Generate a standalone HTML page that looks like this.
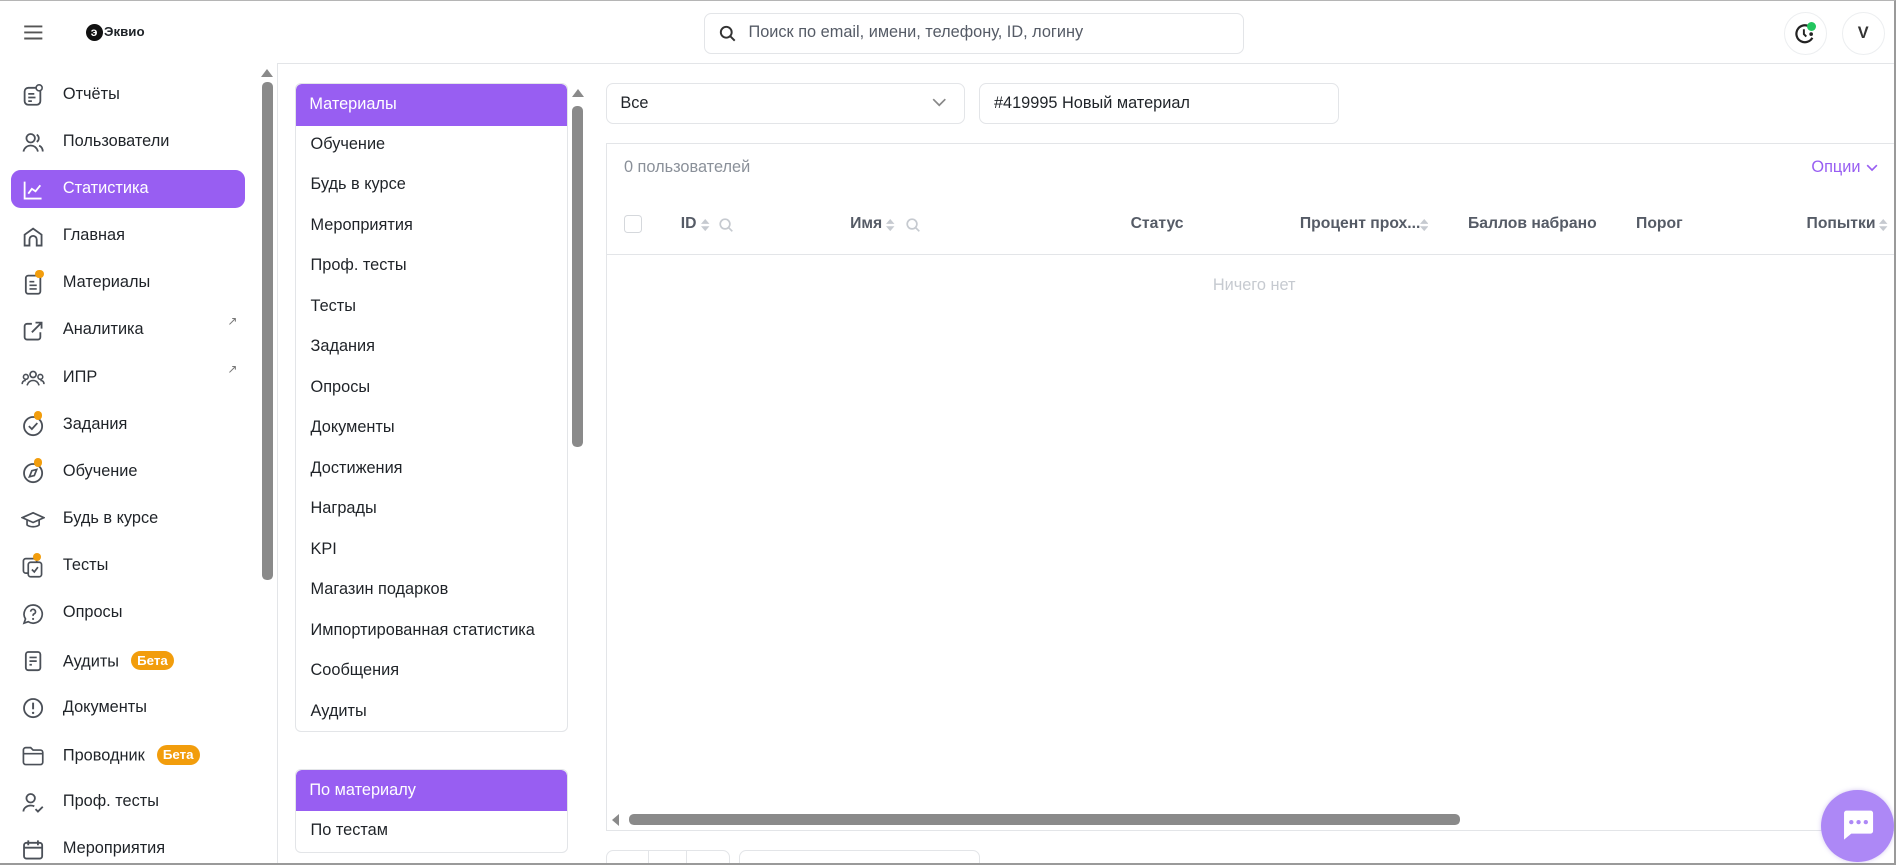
<!DOCTYPE html>
<html><head><meta charset="utf-8">
<style>
html{zoom:1.2092;overflow:hidden}
body{margin:0;width:1568px;height:715px;overflow:hidden;background:#fff;font-family:"Liberation Sans","DejaVu Sans",sans-serif;font-size:13.5px;color:#1f2328;position:relative}
.a{position:absolute}
.frame{left:0;top:0;width:1566px;height:713px;border-top:1px solid #b5b5b5;border-right:2px solid #9a9a9a;border-bottom:2px solid #9a9a9a;z-index:5}
.hdrline{left:229px;top:52px;width:1339px;height:1px;background:#e3e5e8}
.side{left:0;top:60px;width:215px}
.it{position:absolute;left:0;height:30px;width:215px}
.it svg{position:absolute;left:17px;top:6px}
.it span{position:absolute;left:52px;top:7px;white-space:nowrap}
.act{left:9px;width:194px;height:31px;background:#985ef2;border-radius:8px}
.beta{display:inline-block;background:#f29d0c;color:#fff;font-size:11px;font-weight:bold;border-radius:9px;padding:2px 5px;margin-left:10px;vertical-align:1px}
.dot{position:absolute;width:7px;height:7px;border-radius:50%;background:#f29d0c}
.sb{background:#8a8a8a;border-radius:4px}
.tri{width:0;height:0;border-left:5px solid transparent;border-right:5px solid transparent;border-bottom:7px solid #8a8a8a}
.box{border:1px solid #e3e5e8;border-radius:5px;background:#fff}
.mi{position:absolute;left:12px;white-space:nowrap}
.ph{background:#985ef2;color:#fff;height:34px;border-radius:5px 5px 0 0;padding-left:11px;line-height:34px}
.th{top:178px;color:#555b66;font-weight:bold;font-size:13px;white-space:nowrap}
</style></head><body>
<div class="a frame"></div>
<div class="a hdrline"></div>
<div class="a" style="left:229px;top:53px;width:1px;height:662px;background:#e3e5e8"></div>

<svg class="a" style="left:19px;top:20px" width="17" height="14"><path d="M1 2H16M1 7H16M1 12H16" stroke="#555" stroke-width="1.6"/></svg>
<div class="a" style="left:71px;top:20px;width:14px;height:14px;border-radius:50%;background:#111"></div>
<div class="a" style="left:75px;top:21px;color:#fff;font-size:10px;font-weight:bold">э</div>
<div class="a" style="left:86px;top:20px;font-size:11px;font-weight:bold">Эквио</div>
<div class="a box" style="left:582px;top:11px;width:445px;height:32px;border-radius:6px"></div>
<svg class="a" style="left:595px;top:21px" width="14" height="14"><circle cx="6" cy="6" r="4.5" stroke="#333" stroke-width="1.6" fill="none"/><path d="M9.5 9.5L13 13" stroke="#333" stroke-width="1.6"/></svg>
<div class="a" style="left:619px;top:19px;color:#555b66">Поиск по email, имени, телефону, ID, логину</div>
<div class="a" style="left:1475px;top:10px;width:34px;height:34px;border:1px solid #eceef0;border-radius:50%"></div>
<svg class="a" style="left:1483px;top:18px" width="20" height="20"><path d="M13 3.5A7 7 0 1 0 16 13" stroke="#222" stroke-width="1.8" fill="none"/><path d="M9 6v4l2 2" stroke="#222" stroke-width="1.6" fill="none"/><circle cx="15" cy="10" r="1.5" fill="#222"/></svg>
<div class="a" style="left:1494px;top:18px;width:8px;height:8px;border-radius:50%;background:#22c55e"></div>
<div class="a" style="left:1523px;top:10px;width:34px;height:34px;border:1px solid #eceef0;border-radius:50%;text-align:center;line-height:34px;font-weight:bold;color:#333">V</div>

<div class="a act" style="top:141px"></div>
<div class="a side">
<div class="it" style="top:3px"><svg width="20" height="20"><rect x="3" y="4" width="13" height="14" rx="3" stroke="#4b5058" stroke-width="1.5" fill="none"/><path d="M6 9h5M6 12h6M6 15h3" stroke="#4b5058" stroke-width="1.4"/><circle cx="15" cy="4" r="2.5" fill="#fff" stroke="#4b5058" stroke-width="1.3"/></svg><span>Отчёты</span></div>
<div class="it" style="top:42px"><svg width="20" height="20"><circle cx="8" cy="6" r="3.5" stroke="#4b5058" stroke-width="1.5" fill="none"/><path d="M2 17c1-4 4-5 6-5s5 1 6 5M13 3a3.5 3.5 0 0 1 0 6M15 12c2 1 3 3 3 5" stroke="#4b5058" stroke-width="1.5" fill="none"/></svg><span>Пользователи</span></div>
<div class="it" style="top:81px"><svg width="20" height="20"><path d="M3 3v14h14M6 13l3-4 3 2 4-5" stroke="#fff" stroke-width="1.5" fill="none"/></svg><span style="color:#fff">Статистика</span></div>
<div class="it" style="top:120px"><svg width="20" height="20"><path d="M3 17V8l7-5 7 5v9h-4v-5a3 3 0 0 0-6 0v5z" stroke="#4b5058" stroke-width="1.5" fill="none"/></svg><span>Главная</span></div>
<div class="it" style="top:159px"><svg width="20" height="20"><rect x="4" y="3" width="12" height="15" rx="2" stroke="#4b5058" stroke-width="1.5" fill="none"/><path d="M7 8h4M7 11h6M7 14h6" stroke="#4b5058" stroke-width="1.4"/></svg><div class="dot" style="left:29px;top:4px"></div><span>Материалы</span></div>
<div class="it" style="top:198px"><svg width="20" height="20"><path d="M9 4H5a2 2 0 0 0-2 2v9a2 2 0 0 0 2 2h9a2 2 0 0 0 2-2v-4M12 3h5v5M17 3l-8 8" stroke="#4b5058" stroke-width="1.5" fill="none"/></svg><span>Аналитика</span><span style="left:188px;top:2px;font-size:10px;color:#777">↗</span></div>
<div class="it" style="top:237px"><svg width="20" height="20"><circle cx="10" cy="7" r="2.5" stroke="#4b5058" stroke-width="1.4" fill="none"/><circle cx="4" cy="9" r="2" stroke="#4b5058" stroke-width="1.3" fill="none"/><circle cx="16" cy="9" r="2" stroke="#4b5058" stroke-width="1.3" fill="none"/><path d="M5 16c1-3 3-4 5-4s4 1 5 4M1 15c0-2 1-3 3-3M19 15c0-2-1-3-3-3" stroke="#4b5058" stroke-width="1.3" fill="none"/></svg><span>ИПР</span><span style="left:188px;top:2px;font-size:10px;color:#777">↗</span></div>
<div class="it" style="top:276px"><svg width="20" height="20"><circle cx="10" cy="10" r="7.5" stroke="#4b5058" stroke-width="1.5" fill="none"/><path d="M6.5 10l2.5 2.5 4.5-5" stroke="#4b5058" stroke-width="1.5" fill="none"/></svg><div class="dot" style="left:28px;top:4px"></div><span>Задания</span></div>
<div class="it" style="top:315px"><svg width="20" height="20"><circle cx="10" cy="10" r="7.5" stroke="#4b5058" stroke-width="1.5" fill="none"/><path d="M7 13l2-5 4-1-2 5z" stroke="#4b5058" stroke-width="1.4" fill="none"/></svg><div class="dot" style="left:28px;top:4px"></div><span>Обучение</span></div>
<div class="it" style="top:354px"><svg width="20" height="20"><path d="M1 8l9-4 9 4-9 4z M5 10v4c2 2 8 2 10 0v-4" stroke="#4b5058" stroke-width="1.4" fill="none"/></svg><span>Будь в курсе</span></div>
<div class="it" style="top:393px"><svg width="20" height="20"><rect x="2" y="3" width="11" height="12" rx="2" stroke="#4b5058" stroke-width="1.4" fill="none"/><rect x="6" y="6" width="11" height="12" rx="2" fill="#fff" stroke="#4b5058" stroke-width="1.4"/><path d="M9 12l2 2 3-4" stroke="#4b5058" stroke-width="1.4" fill="none"/></svg><div class="dot" style="left:27px;top:4px"></div><span>Тесты</span></div>
<div class="it" style="top:432px"><svg width="20" height="20"><path d="M10 2.5a7.5 7.5 0 1 1-4 13.8L2.5 17.5l1.2-3.5A7.5 7.5 0 0 1 10 2.5z" stroke="#4b5058" stroke-width="1.4" fill="none"/><path d="M8 8a2 2 0 1 1 2.5 2c-.5.2-.5 1-.5 1.5" stroke="#4b5058" stroke-width="1.4" fill="none"/><circle cx="10" cy="14" r=".9" fill="#4b5058"/></svg><span>Опросы</span></div>
<div class="it" style="top:471px"><svg width="20" height="20"><rect x="4" y="2.5" width="12" height="15" rx="2" stroke="#4b5058" stroke-width="1.5" fill="none"/><path d="M7 7h6M7 10h6M7 13h2" stroke="#4b5058" stroke-width="1.4"/></svg><span>Аудиты<b class="beta">Бета</b></span></div>
<div class="it" style="top:510px"><svg width="20" height="20"><circle cx="10" cy="10" r="7.5" stroke="#4b5058" stroke-width="1.5" fill="none"/><path d="M10 5.5v5.5" stroke="#4b5058" stroke-width="1.6"/><circle cx="10" cy="14" r="1" fill="#4b5058"/></svg><span>Документы</span></div>
<div class="it" style="top:549px"><svg width="20" height="20"><path d="M2 5a2 2 0 0 1 2-2h4l2 2h6a2 2 0 0 1 2 2v8a2 2 0 0 1-2 2H4a2 2 0 0 1-2-2zM2 8h16" stroke="#4b5058" stroke-width="1.4" fill="none"/></svg><span>Проводник<b class="beta">Бета</b></span></div>
<div class="it" style="top:588px"><svg width="20" height="20"><circle cx="8" cy="6" r="3.5" stroke="#4b5058" stroke-width="1.5" fill="none"/><path d="M2 17c0-3 3-5 6-5 1 0 2 .2 3 .6M12 15l2 2 4-4" stroke="#4b5058" stroke-width="1.5" fill="none"/></svg><span>Проф. тесты</span></div>
<div class="it" style="top:627px"><svg width="20" height="20"><rect x="2.5" y="4" width="15" height="13" rx="2" stroke="#4b5058" stroke-width="1.5" fill="none"/><path d="M2.5 8h15M6 2v4M14 2v4" stroke="#4b5058" stroke-width="1.5"/></svg><span>Мероприятия</span></div>
</div>
<div class="a tri" style="left:216px;top:57px"></div>
<div class="a sb" style="left:217px;top:68px;width:9px;height:412px"></div>

<div class="a box" style="left:244px;top:69px;width:224px;height:535px;overflow:hidden">
<div class="ph">Материалы</div>
<div class="mi" style="top:42px">Обучение</div>
<div class="mi" style="top:75px">Будь в курсе</div>
<div class="mi" style="top:109px">Мероприятия</div>
<div class="mi" style="top:142px">Проф. тесты</div>
<div class="mi" style="top:176px">Тесты</div>
<div class="mi" style="top:209px">Задания</div>
<div class="mi" style="top:243px">Опросы</div>
<div class="mi" style="top:276px">Документы</div>
<div class="mi" style="top:310px">Достижения</div>
<div class="mi" style="top:343px">Награды</div>
<div class="mi" style="top:377px">KPI</div>
<div class="mi" style="top:410px">Магазин подарков</div>
<div class="mi" style="top:444px">Импортированная статистика</div>
<div class="mi" style="top:477px">Сообщения</div>
<div class="mi" style="top:511px">Аудиты</div>
</div>
<div class="a tri" style="left:473px;top:74px"></div>
<div class="a sb" style="left:473px;top:88px;width:9px;height:282px"></div>
<div class="a box" style="left:244px;top:636px;width:224px;height:68px;overflow:hidden">
<div class="ph">По материалу</div>
<div class="mi" style="top:42px">По тестам</div>
</div>

<div class="a box" style="left:501px;top:69px;width:295px;height:32px;border-radius:6px"></div>
<div class="a" style="left:513px;top:78px">Все</div>
<svg class="a" style="left:771px;top:81px" width="12" height="8"><path d="M1 1l5 5 5-5" stroke="#888" stroke-width="1.4" fill="none"/></svg>
<div class="a box" style="left:810px;top:69px;width:296px;height:32px;border-radius:6px"></div>
<div class="a" style="left:822px;top:78px">#419995 Новый материал</div>

<div class="a" style="left:501px;top:118px;width:1067px;height:568px;border-top:1px solid #e3e5e8;border-left:1px solid #e3e5e8;border-bottom:1px solid #e3e5e8"></div>
<div class="a" style="left:516px;top:131px;color:#8a9099">0 пользователей</div>
<div class="a" style="left:1498px;top:131px;color:#985ef2">Опции</div>
<svg class="a" style="left:1543px;top:136px" width="10" height="7"><path d="M1 1l4 4 4-4" stroke="#985ef2" stroke-width="1.4" fill="none"/></svg>
<div class="a" style="left:516px;top:178px;width:13px;height:13px;border:1px solid #d5d8dc;border-radius:3px"></div>
<svg width="0" height="0" style="position:absolute"><defs><g id="s"><path d="M0 4l3.5-4 3.5 4zM0 6l3.5 4 3.5-4z" fill="#c6cad0"/></g><g id="q"><circle cx="5" cy="5" r="4" stroke="#c6cad0" stroke-width="1.4" fill="none"/><path d="M8 8l3 3" stroke="#c6cad0" stroke-width="1.4"/></g></defs></svg>
<div class="a th" style="left:563px">ID</div>
<svg class="a" style="left:580px;top:181px" width="7" height="10"><use href="#s"/></svg>
<svg class="a" style="left:595px;top:180px" width="12" height="12"><use href="#q"/></svg>
<div class="a th" style="left:703px">Имя</div>
<svg class="a" style="left:733px;top:181px" width="7" height="10"><use href="#s"/></svg>
<svg class="a" style="left:749px;top:180px" width="12" height="12"><use href="#q"/></svg>
<div class="a th" style="left:935px">Статус</div>
<div class="a th" style="left:1075px">Процент прох...</div>
<svg class="a" style="left:1174px;top:181px" width="7" height="10"><use href="#s"/></svg>
<div class="a th" style="left:1214px">Баллов набрано</div>
<div class="a th" style="left:1353px">Порог</div>
<div class="a th" style="left:1494px">Попытки</div>
<svg class="a" style="left:1554px;top:181px" width="7" height="10"><use href="#s"/></svg>
<div class="a" style="left:501px;top:210px;width:1067px;height:1px;background:#e3e5e8"></div>
<div class="a" style="left:1003px;top:228px;color:#c6cad0">Ничего нет</div>
<div class="a" style="left:506px;top:673px;width:0;height:0;border-top:5px solid transparent;border-bottom:5px solid transparent;border-right:6px solid #8a8a8a"></div>
<div class="a sb" style="left:520px;top:673px;width:687px;height:9px"></div>

<div class="a" style="left:501px;top:703px;width:101px;height:12px;border:1px solid #e3e5e8;border-bottom:0;border-radius:6px 6px 0 0"></div>
<div class="a" style="left:536px;top:703px;width:1px;height:12px;background:#e3e5e8"></div>
<div class="a" style="left:567px;top:703px;width:1px;height:12px;background:#e3e5e8"></div>
<div class="a" style="left:611px;top:703px;width:198px;height:12px;border:1px solid #e3e5e8;border-bottom:0;border-radius:6px 6px 0 0"></div>

<div class="a" style="left:1506px;top:653px;width:60px;height:60px;border-radius:50%;background:#ad88f6;box-shadow:0 0 4px rgba(150,120,220,.4)"></div>
<svg class="a" style="left:1520px;top:667px" width="32" height="32"><path d="M5 3h22a2 2 0 0 1 2 2v15a2 2 0 0 1-2 2H11l-6 5V5a2 2 0 0 1 2-2z" fill="#fff"/><circle cx="11" cy="12.5" r="1.8" fill="#ad88f6"/><circle cx="17" cy="12.5" r="1.8" fill="#ad88f6"/><circle cx="23" cy="12.5" r="1.8" fill="#ad88f6"/></svg>
</body></html>
